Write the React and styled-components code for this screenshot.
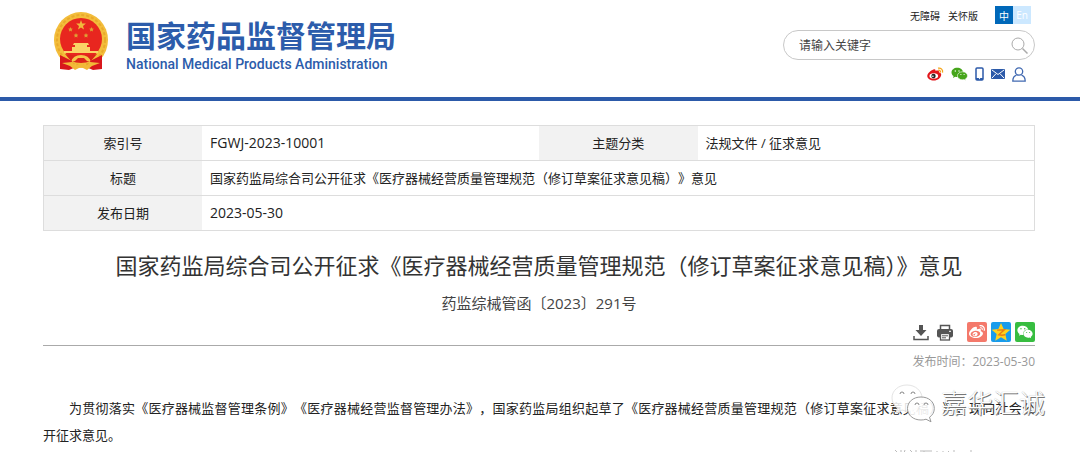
import React from "react";
import styled, { createGlobalStyle, css } from "styled-components";
import { FaWeibo, FaWeixin } from "react-icons/fa";

const GlobalStyle = createGlobalStyle`
  * {
    box-sizing: border-box;
  }

  body {
    margin: 0;
    background: #fff;
    color: #222;
    font-family: "Open Sans", "Noto Sans CJK SC", sans-serif;
    font-size: 13px;
    overflow: hidden;
  }

  a {
    color: inherit;
    text-decoration: none;
  }
`;

const Header = styled.header`
  display: flex;
  justify-content: space-between;
  height: 101px;
  padding: 6px 45px 0 53px;
  border-bottom: 4px solid #2c5aa9;
`;

const Brand = styled.a`
  display: flex;
  gap: 17px;
  padding-top: 6px;
`;

const BrandText = styled.span`
  display: flex;
  flex-direction: column;
  color: #2c5cab;
`;

const BrandName = styled.strong`
  font-family: "Noto Sans CJK SC", sans-serif;
  font-size: 30px;
  line-height: 44px;
`;

const BrandEnglish = styled.span`
  font-family: Roboto, sans-serif;
  font-size: 14px;
  font-weight: 500;
  line-height: 16px;
`;

const HeaderTools = styled.div`
  display: flex;
  flex-direction: column;
  width: 252px;
`;

const TopLinks = styled.nav`
  display: flex;
  justify-content: flex-end;
  align-items: center;
  gap: 8px;
  height: 18px;
  padding-right: 4px;
  font-size: 10px;
`;

const Languages = styled.div`
  display: flex;
  margin-left: 9px;
`;

const LanguageButton = styled.button`
  width: 18px;
  height: 18px;
  padding: 0;
  border: 0;
  background: ${({ $active }) => ($active ? "#0068b9" : "#cce8ff")};
  color: #fff;
  font: inherit;
  cursor: pointer;
`;

const SearchForm = styled.form`
  display: flex;
  align-items: center;
  height: 30px;
  margin-top: 6px;
  padding: 0 6px 0 15px;
  border: 1px solid #c8c8c8;
  border-radius: 15px;
`;

const SearchInput = styled.input`
  flex: 1;
  min-width: 0;
  padding: 0;
  border: 0;
  outline: 0;
  background: none;
  font: inherit;
  font-size: 12px;

  &::placeholder {
    color: #444;
    opacity: 1;
  }
`;

const IconButton = styled.button`
  display: flex;
  padding: 0;
  border: 0;
  background: none;
  cursor: pointer;
`;

const SocialLinks = styled.nav`
  display: flex;
  justify-content: flex-end;
  align-items: center;
  gap: 7px;
  height: 28px;
  padding-right: 9px;
`;

const IconLink = styled.a`
  display: flex;
`;

const Main = styled.main`
  padding: 24px 45px 0 43px;
`;

const InfoTable = styled.table`
  width: 100%;
  table-layout: fixed;
  border-collapse: collapse;
  border: 1px solid #ddd;
`;

const InfoRow = styled.tr`
  height: 35px;
  border-bottom: 1px solid #ddd;
`;

const InfoLabel = styled.th`
  width: 16%;
  padding: 0 0 2px;
  background: #f2f2f2;
  font-weight: 400;
`;

const InfoValue = styled.td`
  padding: 0 8px 2px;
  text-spacing-trim: space-all;

  ${({ $code }) =>
    $code &&
    css`
      font-size: 14px;
    `}
`;

const Title = styled.h1`
  margin: 14px 0 0;
  color: #333;
  font-size: 22px;
  font-weight: 400;
  line-height: 40px;
  text-align: center;
`;

const DocumentNumber = styled.p`
  margin: 7px 0 0;
  color: #444;
  font-size: 15px;
  line-height: 22px;
  text-align: center;
`;

const ShareBar = styled.div`
  display: flex;
  justify-content: flex-end;
  align-items: center;
  gap: 4px;
  margin-top: 8px;
  padding-bottom: 3px;
  border-bottom: 1px solid #aaa;
`;

const PageActions = styled.div`
  display: flex;
  gap: 8px;
  margin-right: 10px;
`;

const ShareButton = styled.button`
  display: flex;
  align-items: center;
  justify-content: center;
  width: 20px;
  height: 20px;
  padding: 0;
  border: 0;
  border-radius: 2px;
  background: ${({ $background }) => $background};
  color: #fff;
  cursor: pointer;
`;

const PublishTime = styled.p`
  margin: 7px 0 0;
  color: #999;
  font-size: 12px;
  line-height: 18px;
  text-align: right;
`;

const Article = styled.article`
  position: relative;
  margin-top: 24px;
`;

const Paragraph = styled.p`
  margin: 0;
  line-height: 27px;
  text-align: justify;
  text-indent: 2em;
  text-spacing-trim: space-all;
`;

const Phrase = styled.span`
  white-space: nowrap;
`;

const Watermark = styled.div`
  position: absolute;
  top: -12px;
  right: -10px;
  display: flex;
  align-items: center;
  gap: 6px;
  color: #fff;
  font-size: 26px;
  font-weight: 300;
  line-height: 40px;
  text-shadow: 1px 1px 0 #777, 0 0 1px #aaa;
`;

const FadedMark = styled.div`
  display: flex;
  justify-content: flex-end;
  padding-right: 60px;
`;

const EmblemIcon = () => (
  <svg width="56" height="60" viewBox="0 0 56 60" aria-hidden="true">
    <path d="M7 40 7 57l9 1 7-3h10l7 3 9-1V40z" fill="#d8171c" />
    <ellipse cx="28" cy="28" rx="27" ry="28" fill="#f3bd3b" />
    <ellipse cx="28" cy="28" rx="24" ry="25" fill="none" stroke="#e9aa2b" strokeWidth="2" strokeDasharray="3 2" />
    <circle cx="28" cy="27" r="21" fill="#e8261f" />
    <path d="m28 8 1.200 3.500 3.700.1-2.900 2.300 1 3.600-3-2.100-3 2.100 1-3.600-2.900-2.300 3.700-.1z" fill="#f0b93c" />
    <g fill="#dfa035">
      <path d="m17.500 15 .7 1.500 1.700.2-1.200 1.100.3 1.700-1.500-.8-1.500.8.3-1.700-1.200-1.100 1.700-.2z" />
      <path d="m38.500 15 .7 1.500 1.700.2-1.200 1.100.3 1.700-1.500-.8-1.500.8.3-1.700-1.200-1.100 1.700-.2z" />
      <path d="m23 21 .7 1.500 1.700.2-1.200 1.100.3 1.700-1.500-.8-1.500.8.3-1.700-1.200-1.100 1.700-.2z" />
      <path d="m33 21 .7 1.500 1.700.2-1.200 1.100.3 1.700-1.500-.8-1.500.8.3-1.700-1.200-1.100 1.700-.2z" />
    </g>
    <path d="M21 31h14l1 2h-2v2h3v4h8v2H11v-2h8v-4h3v-2h-2z" fill="#fad366" />
    <path d="M12 42q16 3 32 0l-6 7q-10 4-20 0z" fill="#dc2419" />
    <path d="M18 50q2-7 10-7 8 0 10 7l-4-1-3-3h-6l-3 3z" fill="#f5c54a" />
    <path d="m7 43 12 6-2 8-10 0zm42 0-12 6 2 8 10 0z" fill="#d8171c" />
    <path d="m9 51 10-1 3 4 6-3 6 3 3-4 10 1-8 3-5 4-6-3-6 3-5-4z" fill="#f2b938" />
  </svg>
);

const SearchIcon = () => (
  <svg width="17" height="17" viewBox="0 0 17 17" fill="none" stroke="#aaa" aria-hidden="true">
    <circle cx="7" cy="7" r="6" />
    <path d="m11.500 11.500 5 5" strokeWidth="1.500" />
  </svg>
);

const WeiboIcon = () => (
  <svg width="17" height="14" viewBox="0 0 17 14" aria-hidden="true">
    <path
      d="M6.500 2.500C8 1.900 8.800 2.700 8.500 4c2-.8 3.900-.4 3.500 1.300 1.400.4 2.400 1.300 2.200 2.700C13.700 11 10.700 13.500 7 13.500 3.300 13.500.3 11.700.3 9 .3 6.500 3.700 3.500 6.500 2.500z"
      fill="#e2151a"
    />
    <ellipse cx="6.800" cy="8.900" rx="4.300" ry="2.700" fill="#fff" />
    <circle cx="6.500" cy="9" r="2.200" fill="#222" />
    <circle cx="5.900" cy="9.300" r=".8" fill="#fff" />
    <path d="M11 1.200c3-.6 5.200 1.600 4.500 4.500M11.200 3.300c1.500-.2 2.500.7 2.200 2.200" fill="none" stroke="#f5a51b" strokeWidth="1.300" />
  </svg>
);

const WechatIcon = ({ color, eye }) => (
  <svg width="17" height="14" viewBox="0 0 17 14" aria-hidden="true">
    <path d="M6.200.8C3 .8.500 2.900.5 5.500c0 1.500.8 2.800 2.100 3.600L2 10.900l2.200-1.100c.7.200 1.300.3 2 .3C9.400 10 12 8 12 5.400 12 2.900 9.400.8 6.200.8z" fill={color} />
    <path
      d="M11.500 4.800c-2.900 0-5.100 1.800-5.100 4s2.200 4 5.100 4c.6 0 1.100-.1 1.600-.2l1.800 1-.5-1.600c1.300-.7 2.100-1.900 2.100-3.200 0-2.200-2.200-4-5-4z"
      fill={color}
      stroke={eye}
      strokeWidth=".6"
    />
    <g fill={eye}>
      <circle cx="4.300" cy="4" r=".7" />
      <circle cx="8" cy="4" r=".7" />
      <circle cx="9.900" cy="7.500" r=".6" />
      <circle cx="13.100" cy="7.500" r=".6" />
    </g>
  </svg>
);

const PhoneIcon = () => (
  <svg width="9" height="14" viewBox="0 0 9 14" aria-hidden="true">
    <rect x="1" y="1" width="7" height="12" rx="1" fill="#fff" stroke="#2c5aa9" strokeWidth="1.500" />
    <path d="M1 11h7v2H1z" fill="#2c5aa9" />
    <circle cx="4.500" cy="11.600" r=".7" fill="#fff" />
  </svg>
);

const MailIcon = () => (
  <svg width="14" height="10" viewBox="0 0 14 10" aria-hidden="true">
    <rect width="14" height="10" rx="1" fill="#2c5aa9" />
    <path d="m1 1 6 4.500L13 1M1 9l4-4.300M13 9 9 4.700" fill="none" stroke="#fff" />
  </svg>
);

const UserIcon = () => (
  <svg width="14" height="15" viewBox="0 0 14 15" fill="none" stroke="#4169b1" strokeWidth="1.300" aria-hidden="true">
    <circle cx="7" cy="4.500" r="3.700" />
    <path d="M4.500 8.200C2 9 .8 11 .8 14.200h12.400C13.200 11 12 9 9.500 8.200" />
  </svg>
);

const DownloadIcon = () => (
  <svg width="16" height="17" viewBox="0 0 16 17" aria-hidden="true">
    <path d="M6 1h4v5h3.500L8 12 2.500 6H6z" fill="#555" />
    <path d="M1 12v3.500h14V12" fill="none" stroke="#555" strokeWidth="1.500" />
  </svg>
);

const PrintIcon = () => (
  <svg width="16" height="17" viewBox="0 0 16 17" aria-hidden="true">
    <path d="M3.500 5V1.500h9V5" fill="none" stroke="#555" strokeWidth="1.500" />
    <rect y="5" width="16" height="8.500" rx="2" fill="#555" />
    <rect x="3.500" y="9.500" width="9" height="6.500" fill="#fff" stroke="#555" strokeWidth="1.300" />
    <path d="M5 11.800h6M5 13.800h4" stroke="#555" />
    <path d="M12 7.300h2" stroke="#fff" />
  </svg>
);

const QzoneIcon = () => (
  <svg width="20" height="20" viewBox="0 0 18 18" aria-hidden="true">
    <path d="m9 .8 2.400 5.500 6 .6-4.500 4 1.300 5.900L9 13.700l-5.200 3.100 1.300-5.900-4.500-4 6-.6z" fill="#ffd21c" />
    <path d="M5.500 7.300 12 7l-5 4.500c2 .5 4 .4 5.700 0" fill="none" stroke="#ea7d13" strokeWidth="1.300" />
  </svg>
);

const WatermarkIcon = () => (
  <svg width="44" height="40" viewBox="0 0 44 40" aria-hidden="true">
    <path
      d="M16 2C7.500 2 1 7.500 1 15c0 4 2 7.500 5.500 10L5 30l6-3c2 .6 3.500 1 5.500 1C25 28 31 22 31 15S24.500 2 16 2z"
      fill="#fff"
      fillOpacity=".85"
      stroke="#e4e4e4"
    />
    <path
      d="M30 14c-8 0-13.500 5-13.500 11.500S22 37 30 37c2 0 3.500-.3 5-.8l5 2.600-1.500-4.600c3-2 4.800-5 4.800-8.700C43.300 19 38 14 30 14z"
      fill="#fff"
      fillOpacity=".9"
      stroke="#999"
    />
    <g fill="#fff" stroke="#888">
      <path d="M9 11a2 2 0 0 1 4 0M20 11a2 2 0 0 1 4 0M24 22a2 2 0 0 1 4 0M33 22a2 2 0 0 1 4 0" />
    </g>
  </svg>
);

const FadedStrokes = () => (
  <svg width="82" height="4" viewBox="0 0 82 4" fill="none" stroke="#bbb" aria-hidden="true">
    <path d="m2 1 2 2M8 1v3M12 1 11 4M17 1l2 2M23 1v3M27 2h12M31 2v2M44 2v2M50 2v2M55 2l2 2M61 1v3M78 1v3" />
  </svg>
);

const App = () => {
  return (
    <>
      <GlobalStyle />
      <Header>
        <Brand href="#">
          <EmblemIcon />
          <BrandText>
            <BrandName>国家药品监督管理局</BrandName>
            <BrandEnglish>National Medical Products Administration</BrandEnglish>
          </BrandText>
        </Brand>
        <HeaderTools>
          <TopLinks>
            <a href="#">无障碍</a>
            <a href="#">关怀版</a>
            <Languages>
              <LanguageButton type="button" $active>中</LanguageButton>
              <LanguageButton type="button">En</LanguageButton>
            </Languages>
          </TopLinks>
          <SearchForm onSubmit={(e) => e.preventDefault()}>
            <SearchInput type="text" placeholder="请输入关键字" aria-label="请输入关键字" />
            <IconButton type="submit" aria-label="搜索">
              <SearchIcon />
            </IconButton>
          </SearchForm>
          <SocialLinks>
            <IconLink href="#" aria-label="微博"><WeiboIcon /></IconLink>
            <IconLink href="#" aria-label="微信"><WechatIcon color="#46a51b" eye="#fff" /></IconLink>
            <IconLink href="#" aria-label="手机"><PhoneIcon /></IconLink>
            <IconLink href="#" aria-label="邮箱"><MailIcon /></IconLink>
            <IconLink href="#" aria-label="用户"><UserIcon /></IconLink>
          </SocialLinks>
        </HeaderTools>
      </Header>
      <Main>
        <InfoTable>
          <colgroup>
            <col width="16%" />
            <col width="34%" />
            <col width="16%" />
            <col width="34%" />
          </colgroup>
          <tbody>
            <InfoRow>
              <InfoLabel scope="row">索引号</InfoLabel>
              <InfoValue $code>FGWJ-2023-10001</InfoValue>
              <InfoLabel scope="row">主题分类</InfoLabel>
              <InfoValue>法规文件 / 征求意见</InfoValue>
            </InfoRow>
            <InfoRow>
              <InfoLabel scope="row">标题</InfoLabel>
              <InfoValue colSpan={3}>
                国家药监局综合司公开征求《医疗器械经营质量管理规范（修订草案征求意见稿）》意见
              </InfoValue>
            </InfoRow>
            <InfoRow>
              <InfoLabel scope="row">发布日期</InfoLabel>
              <InfoValue $code colSpan={3}>2023-05-30</InfoValue>
            </InfoRow>
          </tbody>
        </InfoTable>
        <Title>国家药监局综合司公开征求《医疗器械经营质量管理规范（修订草案征求意见稿）》意见</Title>
        <DocumentNumber>药监综械管函〔2023〕291号</DocumentNumber>
        <ShareBar>
          <PageActions>
            <IconButton type="button" aria-label="下载"><DownloadIcon /></IconButton>
            <IconButton type="button" aria-label="打印"><PrintIcon /></IconButton>
          </PageActions>
          <ShareButton type="button" aria-label="分享到微博" $background="#f4796b">
            <FaWeibo size={16} />
          </ShareButton>
          <ShareButton type="button" aria-label="分享到QQ空间" $background="#189cec">
            <QzoneIcon />
          </ShareButton>
          <ShareButton type="button" aria-label="分享到微信" $background="#37bd40">
            <FaWeixin size={16} />
          </ShareButton>
        </ShareBar>
        <PublishTime>发布时间：2023-05-30</PublishTime>
        <Article>
          <Paragraph>
            为贯彻落实《医疗器械监督管理条例》《医疗器械经营监督管理办法》，国家药监局组织起草了《医疗器械经营质量管理规范（修订草案征求意见稿）》，现向社会公<Phrase>开征求意见。</Phrase>
          </Paragraph>
          <Watermark>
            <WatermarkIcon />
            嘉华汇诚
          </Watermark>
        </Article>
        <FadedMark>
          <FadedStrokes />
        </FadedMark>
      </Main>
    </>
  );
};

export default App;
